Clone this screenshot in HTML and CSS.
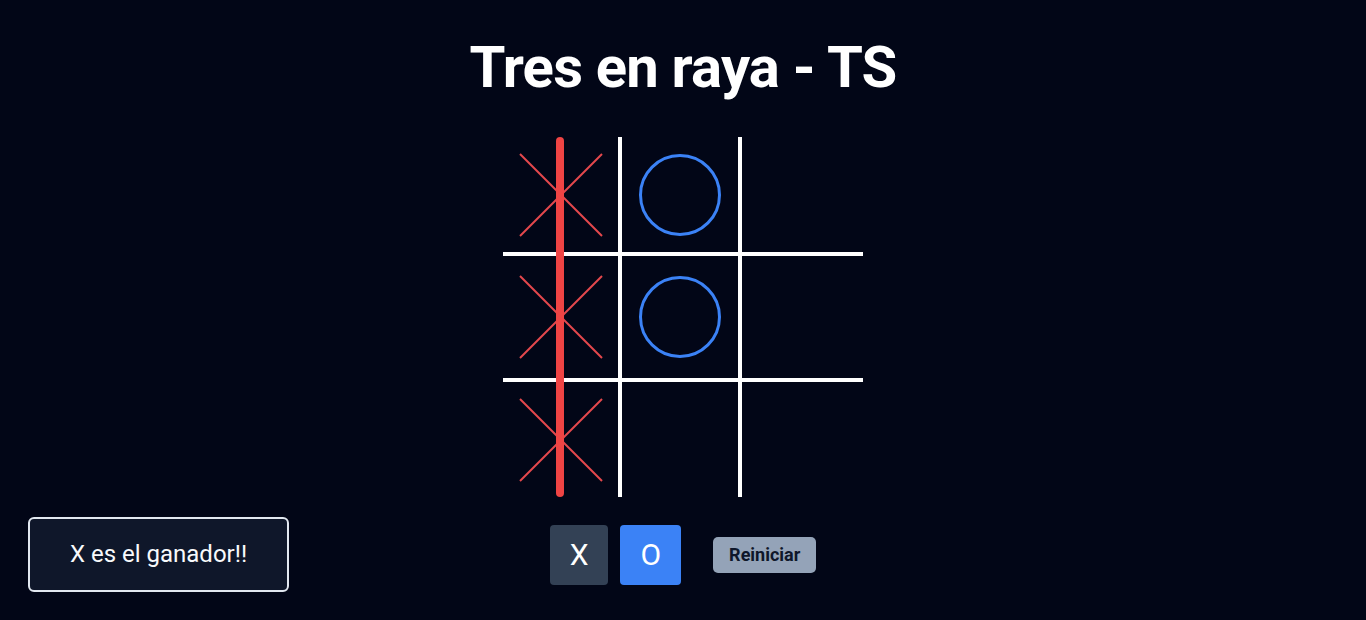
FILE: index.html
```html
<!DOCTYPE html>
<html lang="es">
<head>
<meta charset="utf-8">
<title>Tres en raya - TS</title>
<link rel="stylesheet" href="styles.css">
</head>
<body>
<main class="app">
  <h1 class="title">Tres en raya - TS</h1>
  <section class="board">
    <div class="cell c0 r0"><svg class="mark" viewBox="0 0 82 82"><line x1="0" y1="0" x2="82" y2="82"/><line x1="82" y1="0" x2="0" y2="82"/></svg></div>
    <div class="cell c1 r0"><svg class="mark" viewBox="0 0 82 82"><circle cx="41" cy="41" r="39.5"/></svg></div>
    <div class="cell c2 r0"></div>
    <div class="cell c0 r1"><svg class="mark" viewBox="0 0 82 82"><line x1="0" y1="0" x2="82" y2="82"/><line x1="82" y1="0" x2="0" y2="82"/></svg></div>
    <div class="cell c1 r1"><svg class="mark" viewBox="0 0 82 82"><circle cx="41" cy="41" r="39.5"/></svg></div>
    <div class="cell c2 r1"></div>
    <div class="cell c0 r2"><svg class="mark" viewBox="0 0 82 82"><line x1="0" y1="0" x2="82" y2="82"/><line x1="82" y1="0" x2="0" y2="82"/></svg></div>
    <div class="cell c1 r2"></div>
    <div class="cell c2 r2"></div>
    <div class="win-line"></div>
  </section>
  <div class="controls">
    <div class="turns">
      <button class="turn turn-x">X</button>
      <button class="turn turn-o">O</button>
    </div>
    <button class="reset">Reiniciar</button>
  </div>
</main>
<div class="status">X es el ganador!!</div>
</body>
</html>
```
FILE: styles.css
```css
* { box-sizing: border-box; }
html, body {
  margin: 0;
  padding: 0;
  background: #020617;
  height: 100%;
}
body {
  font-family: Roboto, "Liberation Sans", sans-serif;
  color: #ffffff;
  overflow: hidden;
  position: relative;
}
.app {
  display: flex;
  flex-direction: column;
  align-items: center;
  padding-top: 31px;
}
.title {
  margin: 0;
  font-size: 58px;
  line-height: 72px;
  font-weight: 700;
  letter-spacing: -0.8px;
}
.board {
  position: relative;
  margin-top: 34px;
  display: grid;
  grid-template-columns: 119px 120px 121px;
  grid-template-rows: 119px 126px 115px;
  width: 360px;
  height: 360px;
}
.cell {
  display: flex;
  align-items: center;
  justify-content: center;
}
.c0, .c1 { border-right: 4px solid #ffffff; }
.r0, .r1 { border-bottom: 4px solid #ffffff; }
.mark {
  width: 82px;
  height: 82px;
  overflow: visible;
}
.mark line {
  stroke: #e5484d;
  stroke-width: 2;
}
.mark circle {
  fill: none;
  stroke: #3b82f6;
  stroke-width: 3;
}
.win-line {
  position: absolute;
  left: 53px;
  top: 0;
  width: 8px;
  height: 360px;
  border-radius: 4px;
  background: #ef4444;
}
.controls {
  margin-top: 28px;
  display: flex;
  align-items: center;
  gap: 32px;
}
.turns {
  display: flex;
  gap: 12px;
}
button {
  font-family: Roboto, "Liberation Sans", sans-serif;
  border: none;
  cursor: pointer;
}
.turn {
  font-size: 30px;
  line-height: 36px;
  padding: 12px 20px;
  border-radius: 4px;
  color: #ffffff;
}
.turn-x { background: #334155; }
.turn-o { background: #3b82f6; }
.reset {
  font-size: 18px;
  line-height: 28px;
  font-weight: 700;
  padding: 4px 16px;
  border-radius: 5px;
  background: #94a3b8;
  color: #0f172a;
}
.status {
  position: absolute;
  left: 28px;
  top: 517px;
  width: 261px;
  padding: 20px 0;
  line-height: 31px;
  font-size: 24px;
  text-align: center;
  color: #f8fafc;
  background: #0f172a;
  border: 2px solid #e2e8f0;
  border-radius: 6px;
}
```
